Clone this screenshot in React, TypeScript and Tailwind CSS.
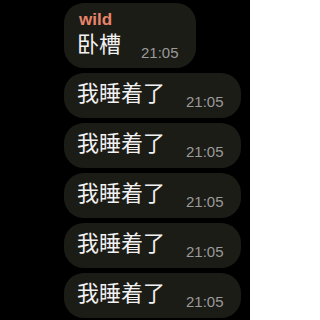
const messages = ["我睡着了", "我睡着了", "我睡着了", "我睡着了", "我睡着了"];

const font = { fontFamily: '"Liberation Sans", "Noto Sans CJK SC", sans-serif' };

export default function App() {
  return (
    <div
      className="w-[250px] h-[320px] overflow-hidden bg-black flex flex-col items-start gap-[5px] pt-[3px] pl-[64px]"
      style={font}
    >
      {/* First message with sender name */}
      <div className="flex flex-col bg-[#1c1c17] rounded-[20px] pl-[13px] pr-[17px] pt-[7px] pb-[8px]">
        <span className="pl-[2px] text-[17px] leading-[20px] font-bold text-[#e8846a]">wild</span>
        <div className="flex items-end mt-[4px]">
          <span className="text-[22px] leading-[22px] mb-[4px] text-[#f2f2f2]">卧槽</span>
          <span className="ml-[20px] text-[15px] leading-[15px] text-[#9a9a9a]">21:05</span>
        </div>
      </div>

      {messages.map((text, i) => (
        <div
          key={i}
          className="flex items-end bg-[#1c1c17] rounded-[20px] pl-[13px] pr-[17px] pt-[10px] pb-[9px]"
        >
          <span className="text-[22px] leading-[22px] mb-[4px] text-[#f2f2f2]">{text}</span>
          <span className="ml-[21px] text-[15px] leading-[15px] text-[#9a9a9a]">21:05</span>
        </div>
      ))}
    </div>
  );
}
